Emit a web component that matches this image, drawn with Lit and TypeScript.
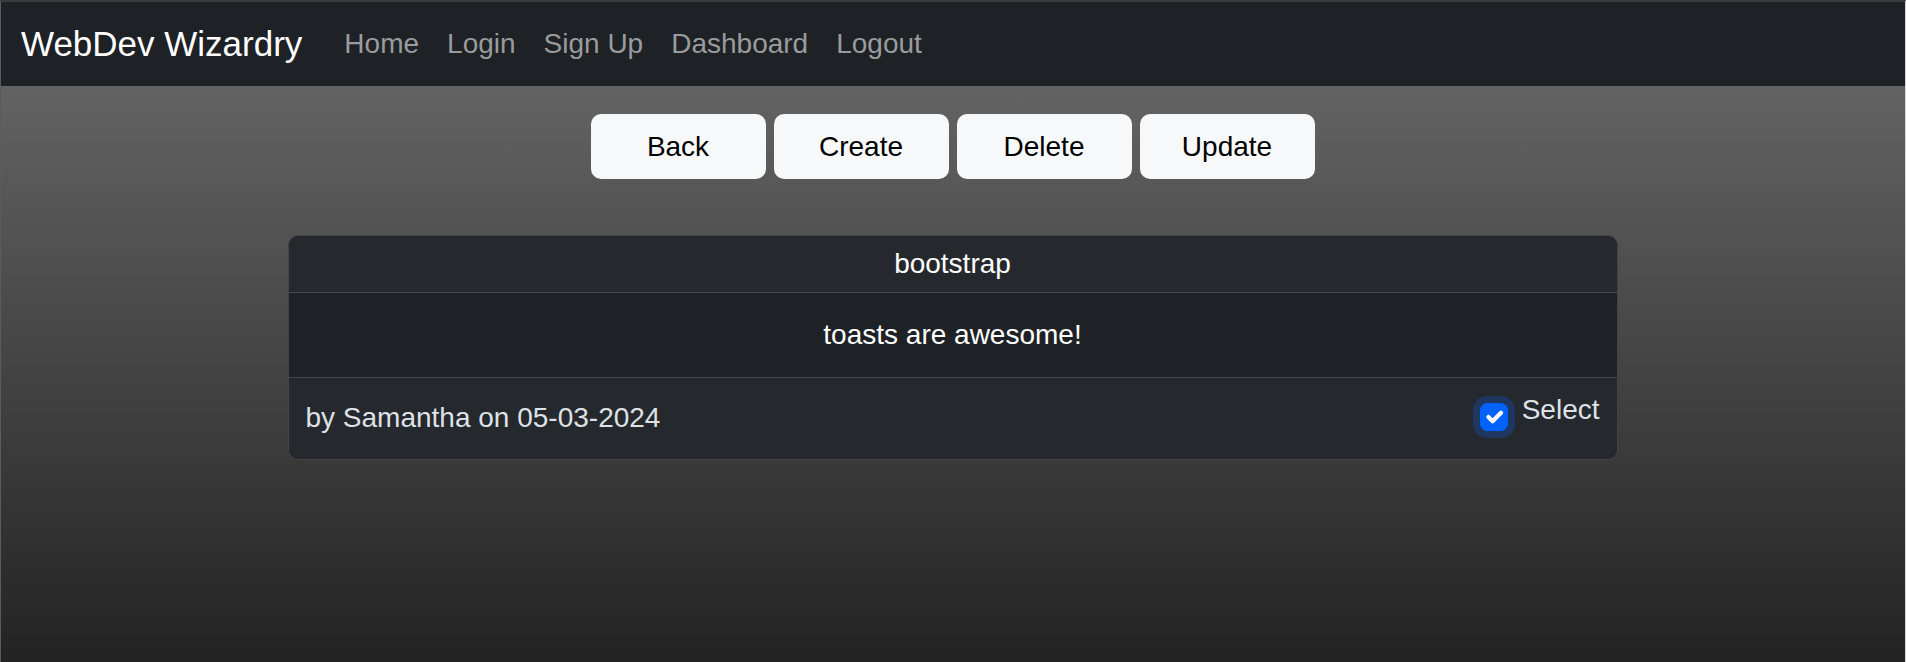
import { LitElement, html, css } from "lit";
import { customElement, property, state } from "lit/decorators.js";

@customElement("nav-bar")
class NavBar extends LitElement {
  static styles = css`
    :host {
      display: block;
    }
    .bar {
      display: flex;
      align-items: center;
      flex-wrap: wrap;
      gap: 42px;
      min-height: 84px;
      box-sizing: border-box;
      padding: 0 20px;
      background: #1e2125;
    }
    a {
      text-decoration: none;
    }
    .brand {
      font-size: 35px;
      line-height: 54px;
      color: #fff;
    }
    .links {
      display: flex;
      flex-wrap: wrap;
      gap: 28px;
      margin: 0;
      padding: 0;
      list-style: none;
    }
    .link {
      color: #9a9b9d;
    }
    .link:hover {
      color: #c8c9ca;
    }
  `;

  @property({ type: Array }) links: string[] = [];

  render() {
    return html`
      <nav class="bar">
        <a class="brand" href="#">WebDev Wizardry</a>
        <ul class="links">
          ${this.links.map(
            (name) => html`<li><a class="link" href="#">${name}</a></li>`
          )}
        </ul>
      </nav>
    `;
  }
}

@customElement("post-card")
class PostCard extends LitElement {
  static styles = css`
    :host {
      display: block;
    }
    .card {
      border: 1px solid #424447;
      border-radius: 10px;
      overflow: hidden;
      background: #1e2125;
      background-clip: padding-box;
      color: #fff;
    }
    .title {
      margin: 0;
      padding: 7px 18px;
      border-bottom: 1px solid #47494c;
      background: #25282c;
      font-size: inherit;
      font-weight: 400;
      text-align: center;
    }
    .body {
      margin: 0;
      padding: 21px 18px;
      text-align: center;
    }
    .footer {
      display: flex;
      justify-content: space-between;
      align-items: flex-end;
      gap: 28px;
      padding: 11px 17px 20px;
      border-top: 1px solid #47494c;
      background: #25282c;
      color: #dee2e6;
    }
    .select {
      display: flex;
      align-items: flex-start;
      gap: 14px;
      min-height: 50px;
    }
    .check {
      display: grid;
      margin-top: 14px;
    }
    .check > * {
      grid-area: 1 / 1;
      width: 28px;
      height: 28px;
    }
    .box {
      appearance: none;
      box-sizing: border-box;
      margin: 0;
      border: 1px solid #47494c;
      border-radius: 7px;
      background: #1e2125;
      outline: none;
    }
    .box:checked {
      border-color: #0062ff;
      background: #0062ff;
      box-shadow: 0 0 0 7px #1f3661;
    }
    .tick {
      pointer-events: none;
      visibility: hidden;
    }
    .box:checked + .tick {
      visibility: visible;
    }
  `;

  @property() heading = "";
  @property() text = "";
  @property() author = "";
  @property() date = "";
  @state() private selected = true;

  private toggle(e: Event) {
    this.selected = (e.target as HTMLInputElement).checked;
  }

  render() {
    return html`
      <article class="card">
        <h2 class="title">${this.heading}</h2>
        <p class="body">${this.text}</p>
        <div class="footer">
          <span>by ${this.author} on ${this.date}</span>
          <div class="select">
            <span class="check">
              <input
                class="box"
                id="select"
                type="checkbox"
                .checked=${this.selected}
                @change=${this.toggle}
              />
              <svg class="tick" viewBox="0 0 20 20" aria-hidden="true">
                <path
                  d="m6 10 3 3 6-6"
                  fill="none"
                  stroke="#fff"
                  stroke-width="3"
                  stroke-linecap="round"
                  stroke-linejoin="round"
                />
              </svg>
            </span>
            <label for="select">Select</label>
          </div>
        </div>
      </article>
    `;
  }
}

@customElement("app-root")
class AppRoot extends LitElement {
  static styles = css`
    :host {
      display: block;
      font-family: "Liberation Sans", Arial, sans-serif;
      font-size: 28px;
      line-height: 42px;
    }
    .page {
      display: flex;
      flex-direction: column;
      min-height: 100vh;
      box-sizing: border-box;
      border-top: 2px solid #3b3b3c;
      border-left: 1px solid #5a5b5c;
      border-right: 1px solid #d6d6d6;
    }
    .main {
      flex: 1;
      padding: 28px 21px 28px 20px;
      background: linear-gradient(#636363, #232323);
    }
    .actions {
      display: flex;
      flex-wrap: wrap;
      justify-content: center;
      gap: 8px;
      margin-bottom: 56px;
    }
    .action {
      width: 175px;
      padding: 12px 20px 11px;
      border: 0;
      border-radius: 10px;
      background: #f7f8fa;
      color: #000;
      font: inherit;
      cursor: pointer;
    }
    .action:hover {
      background: #d3d4d5;
    }
    .post {
      max-width: 1330px;
      margin: 0 auto;
    }
  `;

  private links = ["Home", "Login", "Sign Up", "Dashboard", "Logout"];
  private actions = ["Back", "Create", "Delete", "Update"];

  render() {
    return html`
      <div class="page">
        <nav-bar .links=${this.links}></nav-bar>
        <main class="main">
          <div class="actions">
            ${this.actions.map(
              (name) => html`<button class="action" type="button">${name}</button>`
            )}
          </div>
          <post-card
            class="post"
            heading="bootstrap"
            text="toasts are awesome!"
            author="Samantha"
            date="05-03-2024"
          ></post-card>
        </main>
      </div>
    `;
  }
}
